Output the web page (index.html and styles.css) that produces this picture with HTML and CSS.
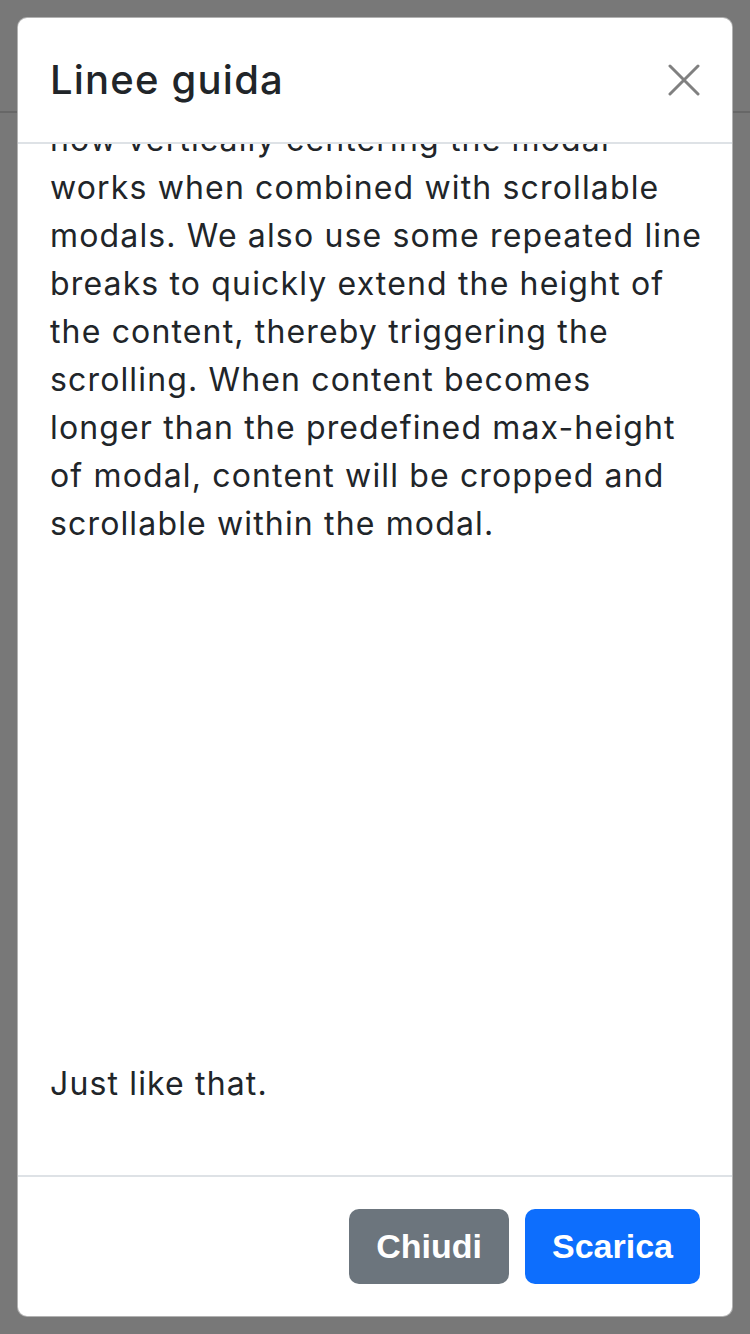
FILE: index.html
```html
<!DOCTYPE html>
<html lang="it">
<head>
<meta charset="utf-8">
<title>Linee guida</title>
<link rel="stylesheet" href="styles.css">
</head>
<body>
<header class="page-header"></header>
<div class="backdrop">
  <div class="modal">
    <div class="modal-header">
      <h5 class="modal-title">Linee guida</h5>
      <button class="btn-close" type="button" aria-label="Close">
        <svg viewBox="0 0 32 32" width="32" height="32" aria-hidden="true">
          <path d="M2 2 L30 30 M30 2 L2 30" fill="none" stroke="#808080" stroke-width="3" stroke-linecap="round"/>
        </svg>
      </button>
    </div>
    <div class="modal-body">
      <div class="scroll-content">
        <p class="para">how vertically centering the modal<br>works when combined with scrollable<br>modals. We also use some repeated line<br>breaks to quickly extend the height of<br>the content, thereby triggering the<br>scrolling. When content becomes<br>longer than the predefined max-height<br>of modal, content will be cropped and<br>scrollable within the modal.</p>
        <br><br><br><br><br><br><br><br><br><br>
        <p class="para">Just like that.</p>
      </div>
    </div>
    <div class="modal-footer">
      <button class="btn btn-secondary" type="button">Chiudi</button>
      <button class="btn btn-primary" type="button">Scarica</button>
    </div>
  </div>
</div>
</body>
</html>
```
FILE: styles.css
```css
html, body {
  margin: 0;
  padding: 0;
  height: 100%;
}
body {
  background: #ffffff;
  position: relative;
  overflow: hidden;
  font-family: Inter, "Liberation Sans", sans-serif;
  color: #212529;
}
.page-header {
  height: 111px;
  border-bottom: 2px solid #dadada;
  background: #ffffff;
}
.backdrop {
  position: absolute;
  inset: 0;
  background: rgba(0, 0, 0, 0.53);
  padding: 17px;
  box-sizing: border-box;
  display: flex;
}
.modal {
  flex: 1;
  background: #ffffff;
  border: 1px solid rgba(0, 0, 0, 0.3);
  border-radius: 10px;
  display: flex;
  flex-direction: column;
  overflow: hidden;
}
.modal-header {
  display: flex;
  align-items: center;
  justify-content: space-between;
  padding: 32px;
  border-bottom: 2px solid #dee2e6;
}
.modal-title {
  margin: 0;
  font-size: 40px;
  line-height: 60px;
  font-weight: 500;
  letter-spacing: 1.2px;
  color: #212529;
}
.btn-close {
  border: 0;
  background: transparent;
  padding: 0;
  width: 32px;
  height: 32px;
  display: flex;
}
.modal-body {
  flex: 1;
  overflow: hidden;
  padding: 32px;
}
.scroll-content {
  margin-top: -60px;
  font-size: 32px;
  line-height: 48px;
}
.para {
  margin: 0 0 32px;
  font-size: 32px;
  line-height: 48px;
  letter-spacing: 1.15px;
  white-space: nowrap;
}
.modal-footer {
  display: flex;
  justify-content: flex-end;
  gap: 16px;
  padding: 32px;
  border-top: 2px solid #dee2e6;
}
.btn {
  border: 0;
  border-radius: 10px;
  height: 75px;
  padding: 0 27px;
  font-family: "Liberation Sans", Arial, sans-serif;
  font-weight: bold;
  font-size: 34px;
  color: #ffffff;
}
.btn-secondary {
  background: #6c757d;
}
.btn-primary {
  background: #0d6efd;
}
```
